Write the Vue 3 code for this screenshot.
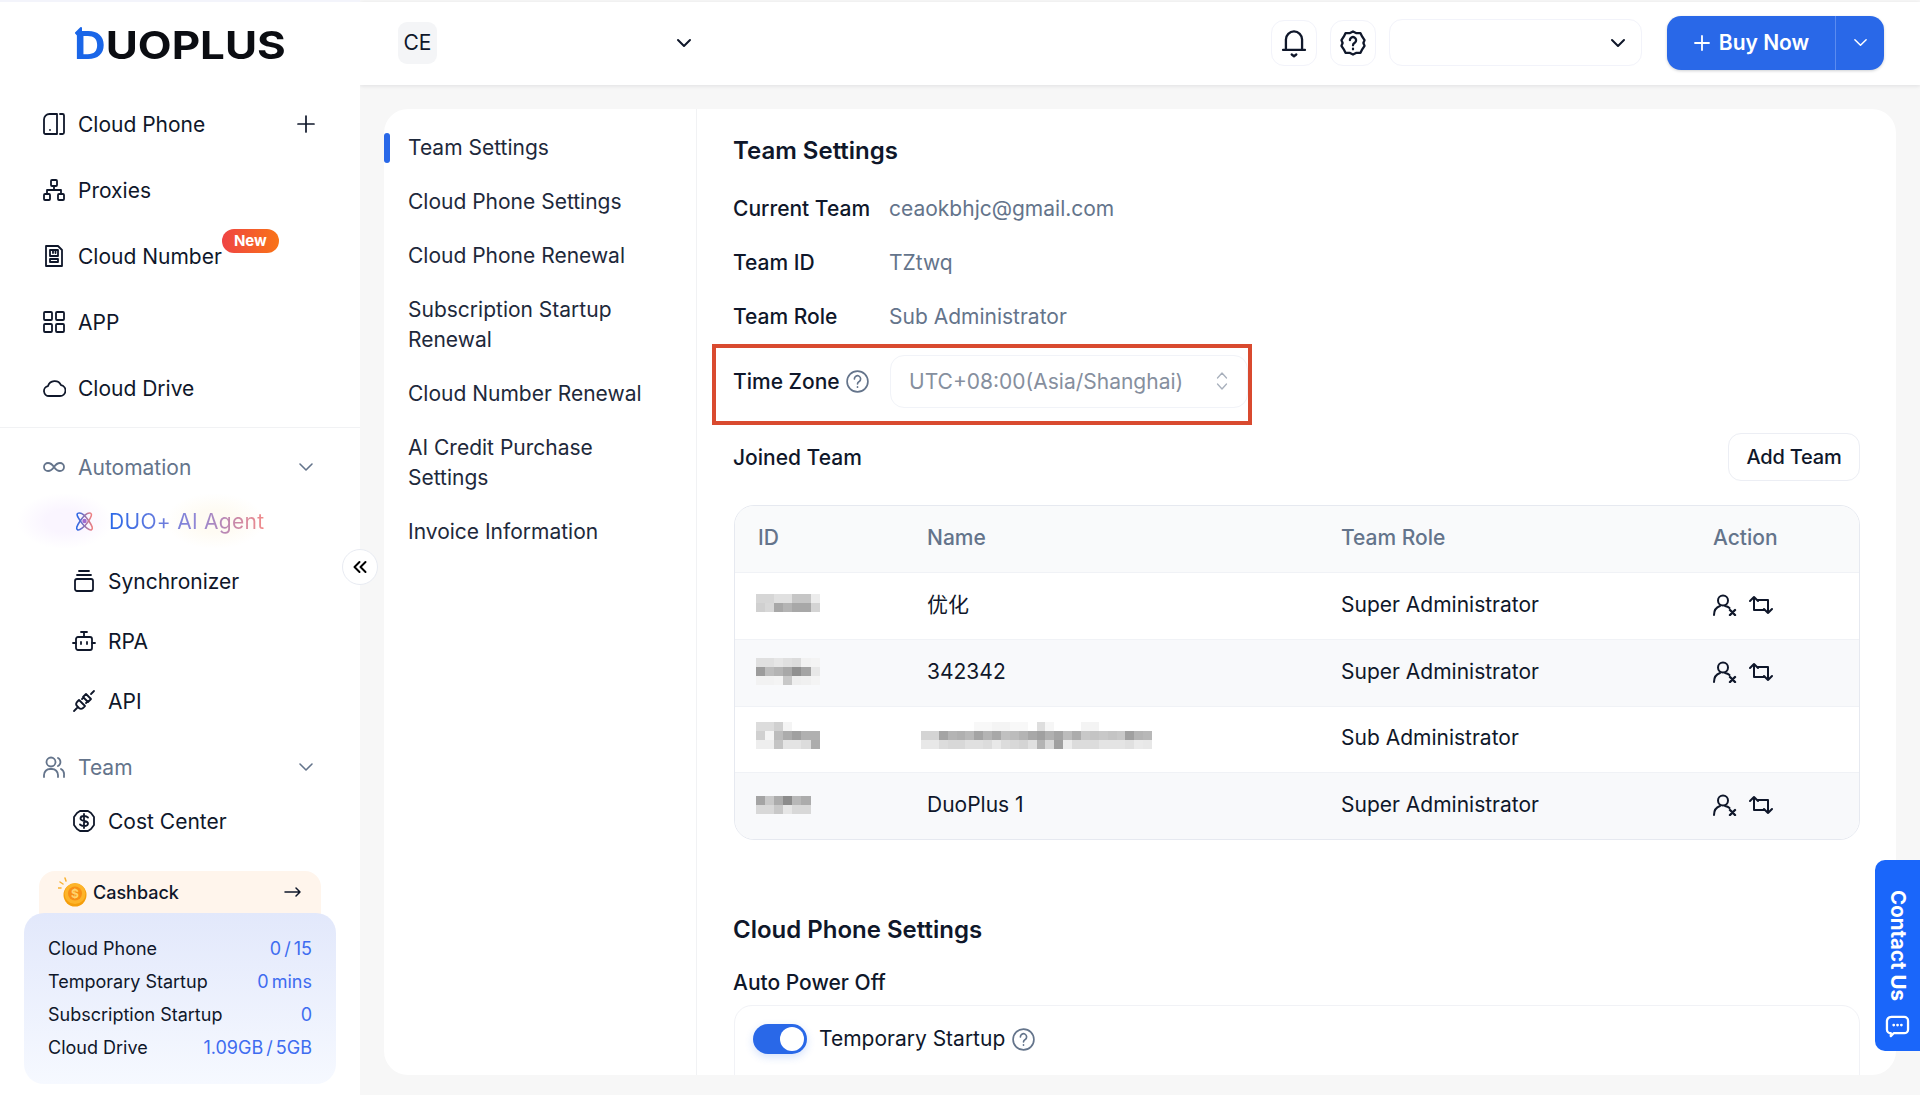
<template>
  <div class="page">
    <aside class="sidebar">
      <div class="logo">
        <span class="logo-text"><span class="logo-d">D</span>UOPLUS</span>
        <svg class="logo-arrow" viewBox="0 0 10 12"><path d="M7 1L2 6l5 5z" /></svg>
      </div>

      <a class="item">
        <svg class="icon" viewBox="0 0 24 24"><path d="M7.500 2H15v20H3.500a1.500 1.500 0 0 1-1.500-1.500v-13A5.500 5.500 0 0 1 7.500 2z" /><path d="M18 2h2.500A1.500 1.500 0 0 1 22 3.500v17a1.500 1.500 0 0 1-1.500 1.500H18" /><path d="M8 18v.1" /></svg>
        <span>Cloud Phone</span>
        <svg class="plus" viewBox="0 0 18 18"><path d="M9 1v16M1 9h16" /></svg>
      </a>
      <a class="item">
        <svg class="icon" viewBox="0 0 24 24"><rect x="9" y="2" width="6" height="6" rx="1" /><rect x="2" y="16" width="6" height="6" rx="1" /><rect x="16" y="16" width="6" height="6" rx="1" /><path d="M12 8v4M5 16v-4h14v4" /></svg>
        <span>Proxies</span>
      </a>
      <a class="item">
        <svg class="icon" viewBox="0 0 24 24"><path d="M4 2h12l4 4v16H4z" /><path d="M8 6h8v6H8zM8 15h8v3H8zM11 6v3M13.500 6v3" /></svg>
        <span class="with-badge">Cloud Number<em class="badge">New</em></span>
      </a>
      <a class="item">
        <svg class="icon" viewBox="0 0 24 24"><rect x="2" y="2" width="8" height="8" rx="1" /><rect x="14" y="2" width="8" height="8" rx="1" /><rect x="2" y="14" width="8" height="8" rx="1" /><rect x="14" y="14" width="8" height="8" rx="1" /></svg>
        <span>APP</span>
      </a>
      <a class="item">
        <svg class="icon" viewBox="0 0 24 24"><path d="M7 20a5 5 0 0 1-1-9.900 7 7 0 0 1 13-1A5.500 5.500 0 0 1 18 20z" /></svg>
        <span>Cloud Drive</span>
      </a>

      <div class="divider"></div>

      <a class="group">
        <svg class="icon" viewBox="0 0 24 24"><path d="M12 12c-2-3-3.500-4-6-4a4 4 0 0 0 0 8c2.500 0 4-1 6-4zm0 0c2 3 3.500 4 6 4a4 4 0 0 0 0-8c-2.500 0-4 1-6 4z" /></svg>
        <span>Automation</span>
        <svg class="chev" viewBox="0 0 16 16"><path d="M2 5l6 6 6-6" /></svg>
      </a>
      <a class="sub agent">
        <svg class="icon" viewBox="0 0 24 24">
          <defs><linearGradient id="atom" x1="0" y1="0" x2="1" y2="0"><stop offset="0" stop-color="#2968e8" /><stop offset="1" stop-color="#f07f7f" /></linearGradient></defs>
          <g stroke="url(#atom)"><path d="M5 3c3-1 8 3 12 9s5 9 3 10-8-3-12-9S2 4 5 3z" /><path d="M19 3c-3-1-8 3-12 9s-5 9-3 10 8-3 12-9 5-9 3-10z" /></g>
          <circle cx="12" cy="12" r="2.500" fill="#a06ccf" stroke="none" />
        </svg>
        <span class="agent-text">DUO+ AI Agent</span>
      </a>
      <a class="sub tall">
        <svg class="icon" viewBox="0 0 24 24"><rect x="3" y="10" width="18" height="12" rx="2" /><path d="M5 6h14M7 2h10" /></svg>
        <span>Synchronizer</span>
      </a>
      <a class="sub tall">
        <svg class="icon" viewBox="0 0 24 24"><rect x="4" y="8" width="16" height="13" rx="2" /><path d="M12 8V3M9 3h6M1 14h3M20 14h3M9 13v2M15 13v2" /></svg>
        <span>RPA</span>
      </a>
      <a class="sub tall">
        <svg class="icon" viewBox="0 0 24 24"><path d="M14 5l5 5-3 3-5-5zM19 5l3-3M7 11l6 6-2 2a3 3 0 0 1-4 0l-2-2a3 3 0 0 1 0-4zM5 19l-3 3M10 10l2-2M14 14l2-2" /></svg>
        <span>API</span>
      </a>
      <a class="group team">
        <svg class="icon" viewBox="0 0 24 24"><circle cx="9" cy="7" r="4.500" /><path d="M2 22v-2a6 6 0 0 1 6-6h2a6 6 0 0 1 6 6v2M16 3a4.500 4.500 0 0 1 0 8M19 14a6 6 0 0 1 3 6v2" /></svg>
        <span>Team</span>
        <svg class="chev" viewBox="0 0 16 16"><path d="M2 5l6 6 6-6" /></svg>
      </a>
      <a class="sub">
        <svg class="icon" viewBox="0 0 24 24"><path d="M8 2h8l3 2 3 4v8l-3 4-3 2H8l-3-2-3-4V8l3-4z" /><path d="M16 8.500c-1-1-2.500-1.500-4-1.500-2 0-3.500 1-3.500 2.500 0 3.500 7.500 1.500 7.500 5 0 1.500-1.500 2.500-4 2.500-1.500 0-3-.5-4-1.500M12 5v14" /></svg>
        <span>Cost Center</span>
      </a>

      <div class="cashback">
        <svg class="coin" viewBox="0 0 30 30">
          <path d="M5 7L2 5M8 4L7 1M3 11H0" stroke="#f9b233" stroke-width="1.500" fill="none" />
          <circle cx="17" cy="18" r="11.500" fill="#f59e0b" />
          <circle cx="17" cy="16.500" r="10.500" fill="#fdb42a" />
          <circle cx="17" cy="16.500" r="7" fill="#f88f16" />
          <text x="17" y="21" text-anchor="middle" font-size="12" font-weight="700" fill="#ffd36b">$</text>
        </svg>
        <span class="cashback-label">Cashback</span>
        <svg class="arrow" viewBox="0 0 18 12"><path d="M1 6h15M12 2l4 4-4 4" /></svg>
      </div>
      <div class="usage">
        <div v-for="row in usage" :key="row.label" class="usage-row">
          <span>{{ row.label }}</span>
          <span class="usage-value">{{ row.value }}</span>
        </div>
      </div>

      <button class="collapse">
        <svg viewBox="0 0 16 16"><path d="M7.500 3L2.500 8l5 5M13.500 3l-5 5 5 5" /></svg>
      </button>
    </aside>

    <div class="main">
      <header class="topbar">
        <div class="avatar">CE</div>
        <svg class="top-chev" viewBox="0 0 16 16"><path d="M2 5l6 6 6-6" /></svg>
        <div class="top-right">
          <button class="square">
            <svg viewBox="0 0 24 26"><path d="M5 19V10a7 7 0 0 1 14 0v9M2.500 19h19" /><path d="M10 23l2 1.500 2-1.500" /></svg>
          </button>
          <button class="square">
            <svg viewBox="0 0 24 26"><path transform="translate(0 1)" d="M12 2l3 1.500 3.500 0 1.500 3 2 3-1 2.500 1 2.500-2 3-1.500 3-3.500 0-3 1.500-3-1.500-3.500 0-1.500-3-2-3 1-2.500-1-2.500 2-3 1.500-3 3.500 0z" /><path transform="translate(0 1)" d="M9.300 9.500a2.700 2.700 0 1 1 4.200 2.300c-1 .6-1.500 1.200-1.500 2.200M12 17v.5" /></svg>
          </button>
          <button class="lang">
            <svg viewBox="0 0 16 16"><path d="M2 5l6 6 6-6" /></svg>
          </button>
          <div class="buy">
            <span class="buy-main">
              <svg viewBox="0 0 18 18"><path d="M9 2v14M2 9h14" /></svg>
              Buy Now
            </span>
            <span class="buy-more">
              <svg viewBox="0 0 16 16"><path d="M2 5l6 6 6-6" /></svg>
            </span>
          </div>
        </div>
      </header>

      <div class="content">
        <nav class="subnav">
          <a v-for="(link, i) in links" :key="link" class="subnav-link" :class="{ active: i === 0 }">{{ link }}</a>
        </nav>

        <section class="panel">
          <h2 class="title">Team Settings</h2>
          <div class="info"><label>Current Team</label><span>ceaokbhjc@gmail.com</span></div>
          <div class="info"><label>Team ID</label><span>TZtwq</span></div>
          <div class="info"><label>Team Role</label><span>Sub Administrator</span></div>

          <div class="zone">
            <label>Time Zone
              <svg class="help" viewBox="0 0 24 24"><circle cx="12" cy="12" r="10" /><path d="M9 9.500a3 3 0 1 1 4.600 2.500c-1 .6-1.600 1.200-1.600 2.300M12 17v.5" /></svg>
            </label>
            <div class="zone-select">
              <span>UTC+08:00(Asia/Shanghai)</span>
              <svg viewBox="0 0 12 20"><path d="M1.500 7L6 2l4.500 5M1.500 13L6 18l4.500-5" /></svg>
            </div>
          </div>

          <div class="joined">
            <span>Joined Team</span>
            <button class="add">Add Team</button>
          </div>

          <div class="table">
            <div class="tr head">
              <div>ID</div><div>Name</div><div>Team Role</div><div>Action</div>
            </div>
            <div v-for="(row, i) in teams" :key="i" class="tr" :class="{ odd: i % 2 === 1 }">
              <div>
                <div class="mosaic id-mosaic" :style="{ gridTemplateColumns: `repeat(${row.id[0].split(' ').length}, 9.100px)` }">
                  <template v-for="(line, l) in row.id" :key="l">
                    <i v-for="(c, k) in line.split(' ')" :key="k" :style="{ background: '#' + c + c + c }"></i>
                  </template>
                </div>
              </div>
              <div>
                <template v-if="row.name">{{ row.name }}</template>
                <div v-else class="mosaic name-mosaic" :style="{ gridTemplateColumns: `repeat(26, 8.900px)` }">
                  <template v-for="(line, l) in blurredName" :key="l">
                    <i v-for="(c, k) in line.split(' ')" :key="k" :style="{ background: '#' + c + c + c }"></i>
                  </template>
                </div>
              </div>
              <div>{{ row.role }}</div>
              <div class="actions">
                <template v-if="row.actions">
                  <svg viewBox="0 0 24 22"><circle cx="10" cy="6.500" r="5" /><path d="M1 21c0-5 3-8 6-9M12 12c2 .3 3.500 1 4.500 2" /><path class="thick" d="M17 16l5 5M22 16l-5 5" /></svg>
                  <svg viewBox="0 0 24 20"><path d="M1 6l4-4 4 4M5 2v13h10M23 14l-4 4-4-4M19 18V5H9" /></svg>
                </template>
              </div>
            </div>
          </div>

          <h2 class="title second">Cloud Phone Settings</h2>
          <div class="auto">Auto Power Off</div>
          <div class="auto-card">
            <span class="toggle"><i></i></span>
            <span>Temporary Startup</span>
            <svg class="help" viewBox="0 0 24 24"><circle cx="12" cy="12" r="10" /><path d="M9 9.500a3 3 0 1 1 4.600 2.500c-1 .6-1.600 1.200-1.600 2.300M12 17v.5" /></svg>
          </div>
        </section>
      </div>
    </div>

    <div class="contact">
      <span>Contact Us</span>
      <svg viewBox="0 0 26 24"><path d="M7 2h13a4 4 0 0 1 4 4v9a4 4 0 0 1-4 4H9l-3 3v-3a4 4 0 0 1-4-4V6a5 5 0 0 1 5-4z" /><path class="dots" d="M9 10.500h.1M13 10.500h.1M17 10.500h.1" /></svg>
    </div>
  </div>
</template>

<script setup>
const usage = [
  { label: 'Cloud Phone', value: '0 / 15' },
  { label: 'Temporary Startup', value: '0 mins' },
  { label: 'Subscription Startup', value: '0' },
  { label: 'Cloud Drive', value: '1.09GB / 5GB' }
]

const links = [
  'Team Settings',
  'Cloud Phone Settings',
  'Cloud Phone Renewal',
  'Subscription Startup Renewal',
  'Cloud Number Renewal',
  'AI Credit Purchase Settings',
  'Invoice Information'
]

// pixelated values, one hex digit pair per cell
const teams = [
  {
    id: ['d6 d6 e0 e0 c6 c6 ec', 'd0 d8 a8 b4 a8 a8 d4'],
    name: '优化',
    role: 'Super Administrator',
    actions: true
  },
  {
    id: ['e0 e0 e6 e0 dc f2 f4', '9c bc b4 a8 90 a4 e8', 'f2 f2 f4 c8 ee f0 f4'],
    name: '342342',
    role: 'Super Administrator',
    actions: true
  },
  {
    id: ['dc dc d0 f4 ff ff ff', 'd0 f4 bc ac a0 b0 b0', 'ee ee c4 e4 e4 dc ac'],
    name: '',
    role: 'Sub Administrator',
    actions: false
  },
  {
    id: ['a4 c8 ac 8c b8 ac', 'd8 d8 c8 e6 d8 d8'],
    name: 'DuoPlus 1',
    role: 'Super Administrator',
    actions: true
  }
]

const blurredName = [
  'ff ff ff ff ff ff f8 f8 f4 f4 f8 f8 ff de f6 ff ff ff f4 f4 ff ff ff ff ff ff',
  'd4 d4 a4 b4 b0 b8 a4 b4 a8 c0 bc b4 a8 a0 b0 a4 bc ac c8 c4 c8 c4 c8 a0 b4 b8',
  'e8 e8 dc d8 d8 e0 e0 dc e8 dc d8 d4 e0 b4 d8 a0 ec dc dc dc e4 e4 e4 e0 ea e8'
]
</script>

<style scoped>
.page {
  position: relative;
  display: flex;
  height: 1095px;
  overflow: hidden;
  background: #f7f7f7;
  font-family: Inter, "Noto Sans CJK SC", sans-serif;
  font-size: 21px;
  color: #0f172a;
}

svg {
  fill: none;
  stroke: currentColor;
  stroke-width: 2;
  stroke-linecap: round;
  stroke-linejoin: round;
}

button {
  font-family: inherit;
  cursor: pointer;
}

/* Sidebar */
.sidebar {
  position: relative;
  z-index: 2;
  width: 360px;
  flex: none;
  padding-top: 2px;
  background: #fff;
  border-top: 2px solid #f3f4fb;
  box-sizing: border-box;
}

.logo {
  position: relative;
  height: 87px;
  padding: 0 0 6px 74px;
  box-sizing: border-box;
  display: flex;
  align-items: center;
}

.logo-text {
  display: inline-block;
  font-size: 38px;
  font-weight: 700;
  line-height: 1;
  color: #0b0d12;
  transform: scaleX(1.155);
  transform-origin: left center;
}

.logo-d {
  color: #1a66e8;
}

.logo-arrow {
  position: absolute;
  left: 74px;
  top: 23px;
  width: 10px;
  height: 12px;
  fill: #1a66e8;
  stroke: #1a66e8;
}

.item {
  height: 66px;
  padding: 0 45px 0 42px;
  display: flex;
  align-items: center;
  gap: 12px;
}

.icon {
  width: 24px;
  height: 24px;
  flex: none;
  stroke-width: 1.800;
}

.plus {
  width: 18px;
  height: 18px;
  margin-left: auto;
  stroke-width: 1.700;
}

.with-badge {
  position: relative;
}

.badge {
  position: absolute;
  left: 100%;
  top: -15px;
  width: 57px;
  height: 24px;
  border-radius: 12px;
  background: linear-gradient(90deg, #ef4444, #f97316);
  color: #fff;
  font-size: 15px;
  font-style: normal;
  font-weight: 700;
  line-height: 24px;
  text-align: center;
}

.divider {
  height: 1px;
  margin-top: 6px;
  background: #f1f2f4;
}

.group {
  height: 54px;
  margin-top: 12px;
  padding: 0 46px 0 42px;
  display: flex;
  align-items: center;
  gap: 12px;
  color: #64748b;
}

.group.team {
  margin-top: 9px;
}

.chev {
  width: 16px;
  height: 16px;
  margin-left: auto;
  stroke-width: 1.600;
}

.sub {
  height: 54px;
  padding-left: 72px;
  display: flex;
  align-items: center;
  gap: 12px;
}

.sub.tall {
  height: 60px;
}

.agent {
  margin-bottom: 3px;
  background:
    radial-gradient(ellipse 48px 28px at 65px 27px, #faf5ff 40%, transparent 100%),
    radial-gradient(ellipse 50px 28px at 215px 27px, #fefbf3 40%, transparent 100%);
}

.agent .icon {
  margin-left: 2px;
  margin-right: 2px;
  width: 21px;
}

.agent-text {
  background: linear-gradient(90deg, #2968e8 0%, #8f87d6 55%, #f08a8a 100%);
  -webkit-background-clip: text;
  background-clip: text;
  color: transparent;
  letter-spacing: 0.3px;
}

.cashback {
  width: 282px;
  height: 52px;
  margin: 23px 0 -10px 39px;
  padding: 0 19px 10px 19px;
  box-sizing: border-box;
  display: flex;
  align-items: center;
  background: #fff5ec;
  border-radius: 16px 16px 0 0;
  font-size: 18px;
  font-weight: 500;
}

.coin {
  width: 30px;
  height: 30px;
  flex: none;
  stroke: none;
}

.cashback-label {
  margin-left: 5px;
}

.arrow {
  width: 18px;
  height: 12px;
  margin-left: auto;
  stroke-width: 1.500;
}

.usage {
  position: relative;
  width: 312px;
  height: 171px;
  margin-left: 24px;
  padding: 19px 24px;
  box-sizing: border-box;
  border-radius: 20px;
  background: linear-gradient(180deg, #e2e8fb, #f6f9ff);
  font-size: 18px;
}

.usage-row {
  height: 33px;
  display: flex;
  align-items: center;
  justify-content: space-between;
}

.usage-value {
  color: #3e6cf0;
  word-spacing: -2px;
}

.collapse {
  position: absolute;
  left: 342px;
  top: 547px;
  width: 36px;
  height: 36px;
  padding: 0;
  border: 1px solid #e8ebf2;
  border-radius: 50%;
  background: #fff;
  display: flex;
  align-items: center;
  justify-content: center;
}

.collapse svg {
  width: 16px;
  height: 16px;
  stroke-width: 2;
}

/* Top bar */
.main {
  flex: 1;
  min-width: 0;
  display: flex;
  flex-direction: column;
}

.topbar {
  height: 83px;
  margin-top: 2px;
  padding: 0 36px 0 38px;
  flex: none;
  display: flex;
  align-items: center;
  background: #fff;
  box-shadow: 0 1px 4px rgba(15, 23, 42, 0.1);
}

.avatar {
  width: 39px;
  height: 42px;
  margin-top: -2px;
  border-radius: 9px;
  background: #f4f5f7;
  text-align: center;
  line-height: 42px;
}

.top-chev {
  width: 16px;
  height: 16px;
  margin-left: 239px;
  margin-top: -2px;
}

.top-right {
  margin-left: auto;
  margin-top: -2px;
  display: flex;
  align-items: center;
}

.square {
  width: 46px;
  height: 46px;
  margin-right: 13px;
  padding: 0;
  display: flex;
  align-items: center;
  justify-content: center;
  border: 1px solid #f2f3fa;
  border-radius: 13px;
  background: #fff;
  color: #0f172a;
}

.square svg {
  width: 28px;
  height: 30px;
}

.lang {
  width: 253px;
  height: 47px;
  margin-right: 25px;
  padding: 0 15px 0 0;
  display: flex;
  align-items: center;
  justify-content: flex-end;
  border: 1px solid #f2f3fa;
  border-radius: 13px;
  background: #fff;
  color: #0f172a;
}

.lang svg {
  width: 16px;
  height: 16px;
}

.buy {
  width: 217px;
  height: 54px;
  display: flex;
  border-radius: 14px;
  background: #2968e8;
  color: #fff;
  font-weight: 600;
  box-shadow: 0 1px 3px rgba(15, 23, 42, 0.2);
}

.buy-main {
  width: 168px;
  display: flex;
  align-items: center;
  justify-content: center;
  gap: 8px;
  border-right: 1px solid #5a8bf0;
}

.buy-main svg {
  width: 18px;
  height: 18px;
  stroke-width: 1.800;
}

.buy-more {
  flex: 1;
  display: flex;
  align-items: center;
  justify-content: center;
}

.buy-more svg {
  width: 15px;
  height: 15px;
  stroke-width: 1.600;
}

/* Content */
.content {
  flex: 1;
  min-height: 0;
  margin: 24px 24px 20px;
  display: flex;
  background: #fff;
  border-radius: 24px;
  overflow: hidden;
}

.subnav {
  width: 313px;
  flex: none;
  box-sizing: border-box;
  padding-top: 12px;
  border-right: 1px solid #f1f2f4;
}

.subnav-link {
  position: relative;
  display: block;
  padding: 12px 30px 12px 24px;
  line-height: 30px;
  color: #1e293b;
}

.subnav-link.active::before {
  content: "";
  position: absolute;
  left: 0;
  top: 12px;
  width: 6px;
  height: 30px;
  border-radius: 3px;
  background: #2968e8;
}

.panel {
  flex: 1;
  min-width: 0;
  padding: 24px 36px 0 36px;
}

.title {
  margin: 0;
  height: 36px;
  font-size: 24px;
  font-weight: 600;
  line-height: 36px;
}

.title.second {
  margin-top: 72px;
}

.info {
  height: 54px;
  display: flex;
  align-items: center;
  font-weight: 500;
}

.title + .info {
  margin-top: 12px;
}

.info label {
  width: 156px;
}

.info span {
  color: #64748b;
  font-weight: 400;
}

.zone {
  width: 540px;
  height: 81px;
  margin: 1px 0 0 -21px;
  padding: 0 0 7px 17px;
  box-sizing: border-box;
  display: flex;
  align-items: center;
  border: 4px solid #d94a2f;
  font-weight: 500;
}

.zone label {
  width: 157px;
  display: flex;
  align-items: center;
  gap: 5px;
}

.help {
  width: 25px;
  height: 25px;
  color: #64748b;
  stroke-width: 1.600;
  flex: none;
}

.zone-select {
  width: 358px;
  height: 53px;
  padding: 0 19px 0 18px;
  box-sizing: border-box;
  display: flex;
  align-items: center;
  justify-content: space-between;
  border: 1px solid #f1f3f8;
  border-radius: 14px;
  color: #868f9e;
  font-weight: 400;
}

.zone-select svg {
  width: 12px;
  height: 20px;
  color: #a8b0bc;
  stroke-width: 1.300;
}

.joined {
  height: 48px;
  margin-top: 8px;
  display: flex;
  align-items: center;
  justify-content: space-between;
  font-weight: 500;
}

.joined > span {
  padding-top: 1px;
}

.add {
  width: 132px;
  height: 48px;
  border: 1px solid #eceef4;
  border-radius: 13px;
  background: #fff;
  color: #0f172a;
  font-size: 20px;
  font-weight: 500;
  letter-spacing: -0.2px;
}

.table {
  margin: 24px 0 0 1px;
  border: 1px solid #e6e9f0;
  border-radius: 20px;
  overflow: hidden;
}

.tr {
  height: 66.750px;
  display: grid;
  grid-template-columns: 169px 413px 372px 1fr;
  align-items: center;
  border-top: 1px solid #f0f2f6;
  box-sizing: border-box;
  line-height: 30px;
}

.tr > div {
  padding: 0 0 2px 24px;
}

.tr > div:nth-child(-n+2) {
  padding-left: 23px;
}

.tr.head {
  height: 66px;
  border-top: none;
  background: #f9fafb;
  color: #64748b;
  font-weight: 500;
}

.tr.odd {
  background: #f8f9fb;
}

.mosaic {
  display: grid;
  grid-auto-rows: 9px;
}

.tr:nth-child(2) .mosaic {
  margin-bottom: 4px;
}

.tr:nth-child(4) .mosaic {
  margin-bottom: 6px;
}

.id-mosaic {
  margin-left: -2px;
}

.name-mosaic {
  margin-left: -6px;
}

.actions {
  display: flex;
  align-items: center;
  gap: 12px;
}

.actions svg {
  width: 24px;
  height: 22px;
  stroke-width: 2;
}

.actions .thick {
  stroke-width: 2.400;
}

.auto {
  height: 30px;
  margin-top: 20px;
  font-weight: 500;
  line-height: 30px;
}

.auto-card {
  height: 120px;
  margin: 7px 0 0 1px;
  padding: 18px 18px 0;
  box-sizing: border-box;
  display: flex;
  align-items: flex-start;
  gap: 12px;
  border: 1px solid #f1f2f6;
  border-radius: 18px;
  line-height: 30px;
}

.auto-card .help {
  margin: 3px 0 0 -6px;
}

.toggle {
  width: 54px;
  height: 30px;
  padding: 3px;
  box-sizing: border-box;
  display: flex;
  justify-content: flex-end;
  border-radius: 15px;
  background: #2968e8;
  box-shadow: 0 3px 8px rgba(41, 104, 232, 0.2);
}

.toggle i {
  width: 24px;
  height: 24px;
  border-radius: 50%;
  background: #fff;
}

/* Contact tab */
.contact {
  position: absolute;
  right: 0;
  top: 860px;
  width: 45px;
  height: 191px;
  padding-top: 30px;
  box-sizing: border-box;
  display: flex;
  flex-direction: column;
  align-items: center;
  gap: 14px;
  border-radius: 10px 0 0 10px;
  background: #1a66fa;
  color: #fff;
  font-size: 20.500px;
  font-weight: 700;
  line-height: 1;
}

.contact span {
  writing-mode: vertical-rl;
  white-space: nowrap;
}

.contact svg {
  width: 25px;
  height: 23px;
  flex: none;
  stroke-width: 2.400;
}

.contact .dots {
  stroke-width: 2.800;
}
</style>

<style>
body {
  margin: 0;
}
</style>
